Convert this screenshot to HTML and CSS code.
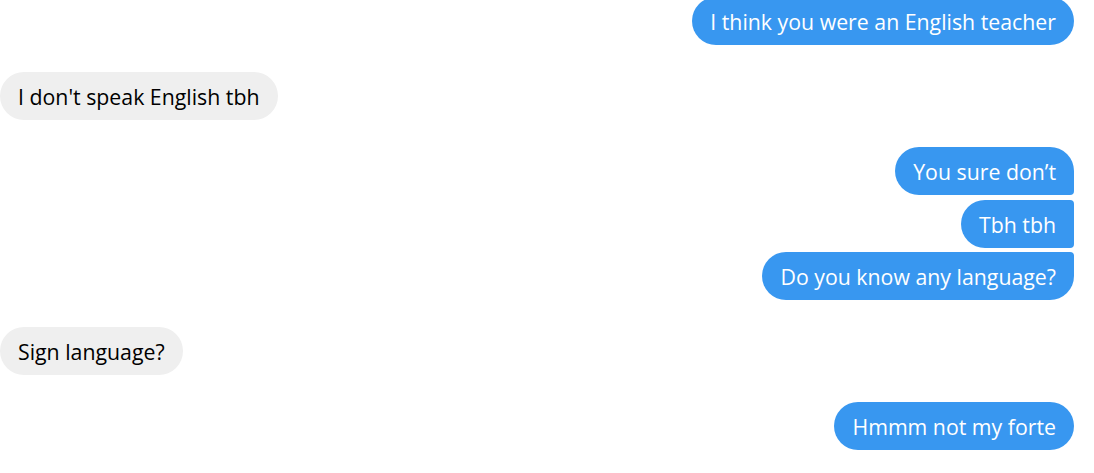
FILE: index.html
```html
<!DOCTYPE html>
<html>
<head>
<meta charset="utf-8">
<link rel="stylesheet" href="styles.css">
</head>
<body>
<div class="chat">
  <div class="group sent">
    <div class="bubble single">I think you were an English teacher</div>
  </div>
  <div class="group received">
    <div class="bubble single">I don't speak English tbh</div>
  </div>
  <div class="group sent">
    <div class="bubble first">You sure don’t</div>
    <div class="bubble middle">Tbh tbh</div>
    <div class="bubble last">Do you know any language?</div>
  </div>
  <div class="group received">
    <div class="bubble single">Sign language?</div>
  </div>
  <div class="group sent">
    <div class="bubble single">Hmmm not my forte</div>
  </div>
</div>
</body>
</html>
```

FILE: styles.css
```css
html, body {
  margin: 0;
  padding: 0;
  background: #ffffff;
}
body {
  font-family: "Open Sans", "Noto Sans", sans-serif;
  overflow: hidden;
}
.chat {
  display: flex;
  flex-direction: column;
  gap: 27px;
  padding: 0 20px 0 0;
  margin-top: -3px;
}
.group {
  display: flex;
  flex-direction: column;
  gap: 4.5px;
}
.group.sent {
  align-items: flex-end;
}
.group.received {
  align-items: flex-start;
}
.bubble {
  height: 48px;
  box-sizing: border-box;
  display: flex;
  align-items: center;
  padding: 2px 18px 0;
  font-size: 21.3px;
  line-height: 1;
  border-radius: 24px;
  white-space: nowrap;
}
.sent .bubble {
  background: #3897f0;
  color: #ffffff;
}
.received .bubble {
  background: #efefef;
  color: #000000;
}
.sent .bubble.first {
  border-bottom-right-radius: 4px;
}
.sent .bubble.middle {
  border-top-right-radius: 4px;
  border-bottom-right-radius: 4px;
}
.sent .bubble.last {
  border-top-right-radius: 4px;
}
```
